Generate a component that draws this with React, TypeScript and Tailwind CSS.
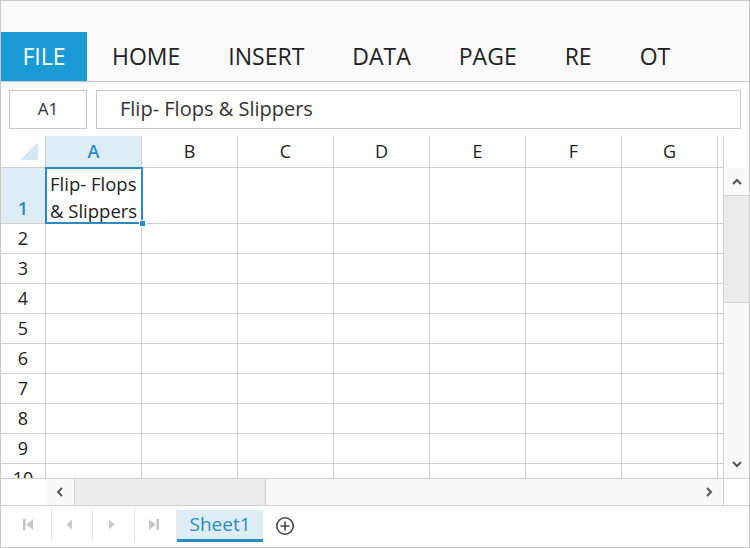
import React from "react";

const tabs = ["HOME", "INSERT", "DATA", "PAGE", "RE", "OT"];
const cols = ["A", "B", "C", "D", "E", "F", "G"];
const rows = [2, 3, 4, 5, 6, 7, 8, 9, 10];

const font = { fontFamily: '"Open Sans", "Noto Sans", sans-serif' };

function Chevron({ dir }: { dir: "up" | "down" | "left" | "right" }) {
  const d = {
    up: "M2 8 L6 4 L10 8",
    down: "M2 4 L6 8 L10 4",
    left: "M8 2 L4 6 L8 10",
    right: "M4 2 L8 6 L4 10",
  }[dir];
  return (
    <svg width="12" height="12" viewBox="0 0 12 12">
      <path d={d} fill="none" stroke="#555" strokeWidth="2" />
    </svg>
  );
}

function NavIcon({ kind }: { kind: "first" | "prev" | "next" | "last" }) {
  return (
    <svg width="11" height="13" viewBox="0 0 11 13">
      {kind === "first" && (
        <>
          <rect x="0" y="1" width="2.5" height="11" fill="#c8c8c8" />
          <path d="M10 1 L3.5 6.5 L10 12 Z" fill="#c8c8c8" />
        </>
      )}
      {kind === "prev" && <path d="M8 1.5 L2.5 6.5 L8 11.5 Z" fill="#c8c8c8" />}
      {kind === "next" && <path d="M3 1.5 L8.5 6.5 L3 11.5 Z" fill="#c8c8c8" />}
      {kind === "last" && (
        <>
          <path d="M1 1 L7.5 6.5 L1 12 Z" fill="#c8c8c8" />
          <rect x="8.5" y="1" width="2.5" height="11" fill="#c8c8c8" />
        </>
      )}
    </svg>
  );
}

export default function App() {
  return (
    <div
      className="w-[750px] h-[548px] border border-[#c8c8c8] bg-white flex flex-col overflow-hidden text-[#333]"
      style={font}
    >
      {/* Ribbon tabs */}
      <div className="h-[81px] shrink-0 bg-[#fafafa] border-b border-[#c8c8c8] flex items-end">
        <div className="w-[86px] h-[49px] bg-[#1b9bd6] text-white text-[23px] flex items-center justify-center">
          FILE
        </div>
        <div className="flex h-[49px] items-center text-[23px] text-[#222] pl-[25px] gap-[48px]">
          {tabs.map((t) => (
            <span key={t}>{t}</span>
          ))}
        </div>
      </div>

      {/* Formula bar */}
      <div className="h-[54px] shrink-0 flex items-center pl-[8px] pr-[8px] gap-[9px]">
        <div className="w-[78px] h-[39px] border border-[#c8c8c8] flex items-center justify-center text-[17px]">
          A1
        </div>
        <div className="flex-1 h-[39px] border border-[#c8c8c8] flex items-center pl-[23px] text-[20px]">
          Flip- Flops &amp; Slippers
        </div>
      </div>

      {/* Grid */}
      <div className="h-[342px] shrink-0 flex">
        <div className="flex-1 overflow-hidden flex flex-col">
          {/* Column header */}
          <div className="h-[32px] shrink-0 flex border-b border-[#d0d0d0]">
            <div className="w-[45px] shrink-0 border-r border-[#d0d0d0] relative">
              <svg className="absolute left-[19px] top-[6px]" width="18" height="18" viewBox="0 0 18 18">
                <path d="M18 0 L18 18 L0 18 Z" fill="#d5e7f3" />
              </svg>
            </div>
            {cols.map((c, i) => (
              <div
                key={c}
                className={`w-[96px] shrink-0 border-r border-[#d0d0d0] flex items-center justify-center text-[18px] ${
                  i === 0 ? "bg-[#deedf5] text-[#2a8bc4] font-semibold" : "text-[#222]"
                }`}
              >
                {c}
              </div>
            ))}
          </div>
          {/* Row 1 */}
          <div className="h-[56px] shrink-0 flex border-b border-[#d0d0d0]">
            <div className="w-[45px] shrink-0 border-r border-[#d0d0d0] bg-[#deedf5] text-[#2a8bc4] font-semibold text-[18px] flex items-end justify-center pb-[1px]">
              1
            </div>
            <div className="w-[96px] shrink-0 relative">
              <div className="absolute -left-px -top-px w-[98px] h-[57px] border-2 border-[#2a8bc4] pl-[3px] pt-[1px] text-[18.5px] leading-[27px] text-[#222] whitespace-nowrap overflow-hidden">
                Flip- Flops
                <br />
                &amp; Slippers
              </div>
              <div className="absolute right-[-4px] bottom-[-4px] w-[7px] h-[7px] bg-[#2a8bc4] border border-white" />
            </div>
            {cols.slice(1).map((c) => (
              <div key={c} className="w-[96px] shrink-0 border-r border-[#d0d0d0]" />
            ))}
          </div>
          {rows.map((r) => (
            <div key={r} className="h-[30px] shrink-0 flex border-b border-[#d0d0d0]">
              <div className="w-[45px] shrink-0 border-r border-[#d0d0d0] text-[18px] text-[#222] flex items-center justify-center">
                {r}
              </div>
              {cols.map((c) => (
                <div key={c} className="w-[96px] shrink-0 border-r border-[#d0d0d0]" />
              ))}
            </div>
          ))}
        </div>
        {/* Vertical scrollbar */}
        <div className="w-[26px] shrink-0 border-l border-[#d0d0d0] flex flex-col">
          <div className="h-[32px] shrink-0 bg-white" />
          <div className="h-[28px] shrink-0 bg-[#f9f9f9] border-b border-[#d0d0d0] flex items-center justify-center">
            <Chevron dir="up" />
          </div>
          <div className="h-[107px] shrink-0 bg-[#ebebeb] border-b border-[#d0d0d0]" />
          <div className="flex-1 bg-[#f9f9f9] flex items-end justify-center pb-[8px]">
            <Chevron dir="down" />
          </div>
        </div>
      </div>

      {/* Horizontal scrollbar */}
      <div className="h-[28px] shrink-0 flex border-t border-b border-[#d0d0d0]">
        <div className="w-[45px] shrink-0 bg-white" />
        <div className="w-[28px] shrink-0 bg-[#f9f9f9] flex items-center justify-center">
          <Chevron dir="left" />
        </div>
        <div className="w-[192px] shrink-0 bg-[#ebebeb] border-l border-r border-[#d0d0d0]" />
        <div className="flex-1 bg-[#f9f9f9] flex items-center justify-end pr-[8px]">
          <Chevron dir="right" />
        </div>
        <div className="w-[26px] shrink-0 border-l border-[#d0d0d0] bg-white" />
      </div>

      {/* Sheet bar */}
      <div className="flex-1 flex items-stretch">
        <div className="flex items-center h-[35px] mt-[1px]">
          {(["first", "prev", "next", "last"] as const).map((k, i) => (
            <div
              key={k}
              className={`h-[34px] flex items-center justify-center ${i < 3 ? "border-r border-[#e6e6e6]" : ""} ${
                ["w-[51px] pl-[4px]", "w-[41px] pr-[6px]", "w-[42px] pr-[4px]", "w-[41px] pr-[4px]"][i]
              }`}
            >
              <NavIcon kind={k} />
            </div>
          ))}
          <div className="h-[34px] w-[1px] bg-[#e6e6e6]" />
        </div>
        <div className="mt-[4px] h-[32px] w-[86px] bg-[#deedf5] border-b-[3px] border-[#2a8bc4] text-[#2a8bc4] text-[19px] flex items-center justify-center">
          Sheet1
        </div>
        <div className="ml-[12px] flex items-center pb-[1px]">
          <svg width="20" height="20" viewBox="0 0 20 20">
            <circle cx="10" cy="10" r="8.2" fill="none" stroke="#444" strokeWidth="1.6" />
            <path d="M10 5.5 V14.5 M5.5 10 H14.5" stroke="#444" strokeWidth="1.6" />
          </svg>
        </div>
      </div>
    </div>
  );
}
